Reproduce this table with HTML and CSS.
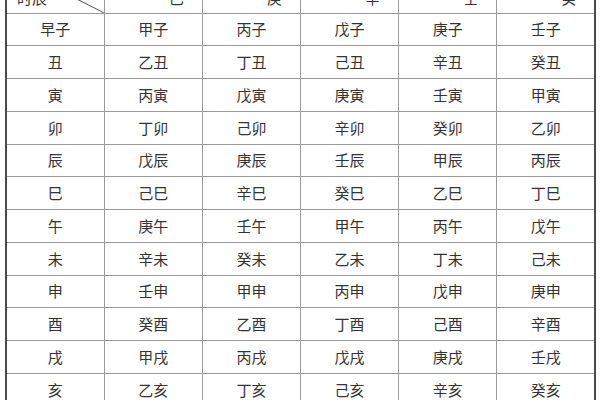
FILE: index.html
```html
<!DOCTYPE html>
<html lang="zh">
<head>
<meta charset="utf-8">
<link rel="stylesheet" href="styles.css">
</head>
<body>
<div class="page">
<table class="ganzhi">
<thead>
<tr>
<th class="corner">
<svg class="diag" viewBox="0 0 100 100" preserveAspectRatio="none"><line x1="35" y1="0" x2="100" y2="100"/></svg>
<span class="corner-bottom">时辰</span>
</th>
<th><span class="hd">己</span></th>
<th><span class="hd">庚</span></th>
<th><span class="hd">辛</span></th>
<th><span class="hd">壬</span></th>
<th><span class="hd">癸</span></th>
</tr>
</thead>
<tbody>
<tr><td>早子</td><td>甲子</td><td>丙子</td><td>戊子</td><td>庚子</td><td>壬子</td></tr>
<tr><td>丑</td><td>乙丑</td><td>丁丑</td><td>己丑</td><td>辛丑</td><td>癸丑</td></tr>
<tr><td>寅</td><td>丙寅</td><td>戊寅</td><td>庚寅</td><td>壬寅</td><td>甲寅</td></tr>
<tr><td>卯</td><td>丁卯</td><td>己卯</td><td>辛卯</td><td>癸卯</td><td>乙卯</td></tr>
<tr><td>辰</td><td>戊辰</td><td>庚辰</td><td>壬辰</td><td>甲辰</td><td>丙辰</td></tr>
<tr><td>巳</td><td>己巳</td><td>辛巳</td><td>癸巳</td><td>乙巳</td><td>丁巳</td></tr>
<tr><td>午</td><td>庚午</td><td>壬午</td><td>甲午</td><td>丙午</td><td>戊午</td></tr>
<tr><td>未</td><td>辛未</td><td>癸未</td><td>乙未</td><td>丁未</td><td>己未</td></tr>
<tr><td>申</td><td>壬申</td><td>甲申</td><td>丙申</td><td>戊申</td><td>庚申</td></tr>
<tr><td>酉</td><td>癸酉</td><td>乙酉</td><td>丁酉</td><td>己酉</td><td>辛酉</td></tr>
<tr><td>戌</td><td>甲戌</td><td>丙戌</td><td>戊戌</td><td>庚戌</td><td>壬戌</td></tr>
<tr><td>亥</td><td>乙亥</td><td>丁亥</td><td>己亥</td><td>辛亥</td><td>癸亥</td></tr>
</tbody>
</table>
</div>
</body>
</html>
```
FILE: styles.css
```css
html, body {
  margin: 0;
  padding: 0;
  background: #ffffff;
}
body {
  font-family: "Noto Sans CJK SC", "Noto Sans", sans-serif;
  color: #333333;
  overflow: hidden;
}
.page {
  padding-left: 5px;
  width: 591px;
}
.ganzhi {
  width: 591px;
  margin-top: -20px;
  border-collapse: collapse;
  table-layout: fixed;
  border-left: 2px solid #4a4a4a;
  border-right: 2px solid #4a4a4a;
}
.ganzhi th,
.ganzhi td {
  border: 1px solid #9a9a9a;
  height: 31.75px;
  padding: 0;
  text-align: center;
  vertical-align: middle;
  font-size: 15px;
  font-weight: 400;
  line-height: 16px;
}
.ganzhi th {
  vertical-align: bottom;
  padding-bottom: 7px;
  height: 24.6px;
}
.ganzhi tr > :first-child {
  border-left: 2px solid #4a4a4a;
}
.ganzhi tr > :last-child {
  border-right: 2px solid #4a4a4a;
}
.corner {
  position: relative;
}
.diag {
  position: absolute;
  left: 0;
  top: 0;
  width: 100%;
  height: 100%;
}
.diag line {
  stroke: #555555;
  stroke-width: 1;
  vector-effect: non-scaling-stroke;
}
.corner-bottom {
  position: absolute;
  left: 10px;
  bottom: 7px;
}
.hd {
  display: block;
  padding-left: 46px;
}
```
